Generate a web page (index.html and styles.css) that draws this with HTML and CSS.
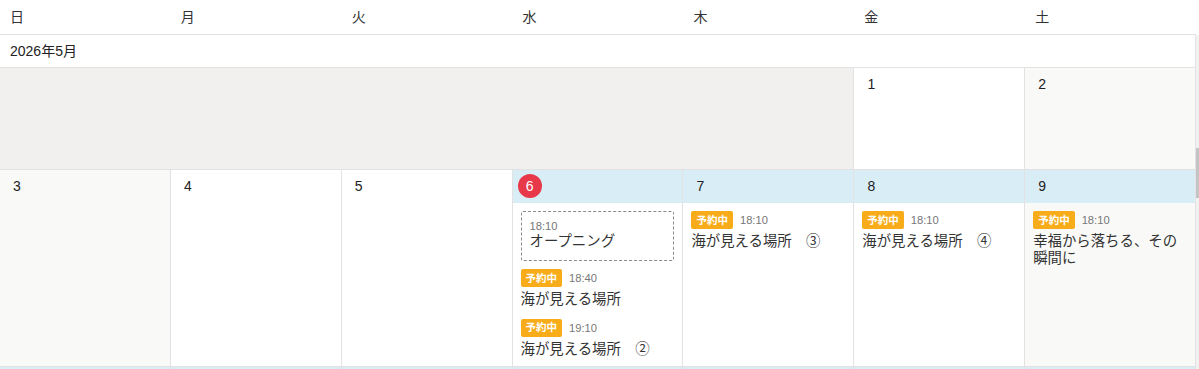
FILE: index.html
```html
<!DOCTYPE html>
<html lang="ja">
<head>
<meta charset="utf-8">
<title>カレンダー</title>
<link rel="stylesheet" href="styles.css">
</head>
<body>
<div class="page">
  <div class="dow-row">
    <div class="dow">日</div>
    <div class="dow">月</div>
    <div class="dow">火</div>
    <div class="dow">水</div>
    <div class="dow">木</div>
    <div class="dow">金</div>
    <div class="dow">土</div>
  </div>
  <div class="main">
    <div class="cal">
      <div class="month-row">2026年5月</div>

      <div class="week week-short">
        <div class="cell blank"></div>
        <div class="cell"><div class="band"><span class="num">1</span></div></div>
        <div class="cell weekend"><div class="band"><span class="num">2</span></div></div>
      </div>

      <div class="week">
        <div class="cell weekend"><div class="band"><span class="num">3</span></div></div>
        <div class="cell"><div class="band"><span class="num">4</span></div></div>
        <div class="cell"><div class="band"><span class="num">5</span></div></div>
        <div class="cell">
          <div class="band future"><span class="num today">6</span></div>
          <div class="events">
            <div class="opening">
              <div class="time">18:10</div>
              <div class="title">オープニング</div>
            </div>
            <div class="event">
              <div class="event-head"><span class="badge">予約中</span><span class="time">18:40</span></div>
              <div class="title">海が見える場所</div>
            </div>
            <div class="event">
              <div class="event-head"><span class="badge">予約中</span><span class="time">19:10</span></div>
              <div class="title">海が見える場所　②</div>
            </div>
          </div>
        </div>
        <div class="cell">
          <div class="band future"><span class="num">7</span></div>
          <div class="events">
            <div class="event">
              <div class="event-head"><span class="badge">予約中</span><span class="time">18:10</span></div>
              <div class="title">海が見える場所　③</div>
            </div>
          </div>
        </div>
        <div class="cell">
          <div class="band future"><span class="num">8</span></div>
          <div class="events">
            <div class="event">
              <div class="event-head"><span class="badge">予約中</span><span class="time">18:10</span></div>
              <div class="title">海が見える場所　④</div>
            </div>
          </div>
        </div>
        <div class="cell weekend">
          <div class="band future"><span class="num">9</span></div>
          <div class="events">
            <div class="event">
              <div class="event-head"><span class="badge">予約中</span><span class="time">18:10</span></div>
              <div class="title">幸福から落ちる、その瞬間に</div>
            </div>
          </div>
        </div>
      </div>

      <div class="week">
        <div class="cell weekend"><div class="band future"></div></div>
        <div class="cell"><div class="band future"></div></div>
        <div class="cell"><div class="band future"></div></div>
        <div class="cell"><div class="band future"></div></div>
        <div class="cell"><div class="band future"></div></div>
        <div class="cell"><div class="band future"></div></div>
        <div class="cell weekend"><div class="band future"></div></div>
      </div>
    </div>
    <div class="scrollbar"><div class="thumb"></div></div>
  </div>
</div>
</body>
</html>
```

FILE: styles.css
```css
html, body {
  margin: 0;
  padding: 0;
  background: #ffffff;
  overflow: hidden;
}

body {
  font-family: "Liberation Sans", "Noto Sans CJK JP", sans-serif;
  color: #333333;
  font-size: 14px;
}

.page {
  width: 1199px;
  height: 369px;
  display: flex;
  flex-direction: column;
  overflow: hidden;
}

.dow-row {
  width: 1196px;
  display: grid;
  grid-template-columns: repeat(7, 1fr);
  border-bottom: 1px solid #e2e2e2;
  flex: none;
}

.dow {
  height: 34px;
  line-height: 34px;
  padding-left: 10px;
  font-size: 14px;
  color: #333333;
}

.main {
  flex: 1;
  display: flex;
  min-height: 0;
}

.cal {
  width: 1196px;
  overflow: hidden;
}

.scrollbar {
  width: 3px;
  background: #f1f1f1;
  flex: none;
}

.thumb {
  margin-top: 113px;
  height: 50px;
  background: #c4c4c4;
}

.month-row {
  height: 32px;
  line-height: 32px;
  padding-left: 10px;
  border-bottom: 1px solid #e2e2e2;
  border-right: 1px solid #e2e2e2;
  font-size: 14px;
  color: #222222;
}

.week {
  display: grid;
  grid-template-columns: repeat(7, 1fr);
  border-bottom: 1px solid #e2e2e2;
}

.cell {
  border-right: 1px solid #e2e2e2;
  min-height: 100px;
  background: #ffffff;
  min-width: 0;
}

.week-short .cell {
  min-height: 101px;
}

.cell.weekend {
  background: #f9f9f7;
}

.cell.blank {
  grid-column: span 5;
  background: #f1f0ee;
}

.band {
  padding: 4px 0 5px 5px;
  height: 24px;
}

.band.future {
  background: #d9edf7;
}

.num {
  display: block;
  width: 24px;
  height: 24px;
  line-height: 24px;
  text-align: center;
  font-size: 14px;
  color: #222222;
}

.num.today {
  background: #e8394a;
  color: #ffffff;
  border-radius: 50%;
}

.events {
  padding: 8px 8px 8px 8px;
  display: flex;
  flex-direction: column;
}

.opening {
  border: 1px dashed #8a8a8a;
  border-radius: 2px;
  padding: 7px 8px 10px 8px;
  margin-bottom: 8px;
}

.time {
  font-size: 11.2px;
  line-height: 14px;
  color: #777777;
}

.title {
  font-size: 14.4px;
  line-height: 1.2;
  color: #333333;
}

.event {
  margin-bottom: 10px;
}

.event:last-child {
  margin-bottom: 0;
}

.event-head {
  display: flex;
  align-items: center;
  height: 18px;
}

.event-head .time {
  margin-left: 7px;
}

.event .title {
  margin-top: 4px;
}

.badge {
  display: inline-flex;
  align-items: center;
  height: 18px;
  padding: 0 5px;
  background: #f8ac1a;
  color: #ffffff;
  font-weight: bold;
  font-size: 10.5px;
  border-radius: 2px;
  line-height: 1;
}
```
